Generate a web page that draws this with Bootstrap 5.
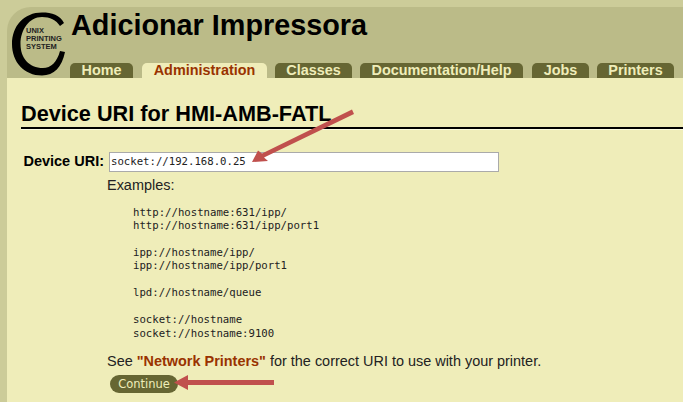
<!DOCTYPE html>
<html lang="en"><head><meta charset="utf-8"><title>Adicionar Impressora</title>
<link href="https://cdn.jsdelivr.net/npm/bootstrap@5.3.0/dist/css/bootstrap.min.css" rel="stylesheet">
<style>
html,body{height:100%;overflow:hidden}
body{background:#cccc99;font-family:"Liberation Sans",Arial,sans-serif;color:#111;position:relative}
.shell{padding:7px 0 0 7px;height:402px}
.head-band{background:#bbbb88;height:71px;border-top-left-radius:24px;position:relative}
.logo-c{position:absolute;left:4px;top:4px}
.logo-t{position:absolute;left:19px;top:20px;font-size:7.500px;line-height:8px;font-weight:700;color:#222}
.page-name{font-size:28.8px;font-weight:700;color:#000;margin:0;position:absolute;left:64px;top:2px;line-height:32px}
.tab-row{position:absolute;left:63px;bottom:0;display:flex}
.tab-item{background:#666633;color:#efedb9;font-size:14.4px;font-weight:700;height:15px;line-height:15px;border-radius:5px 5px 0 0;text-align:center;text-decoration:none;flex:none}
.tab-item.on{background:#efedb9;color:#993300}
.body-pane{background:#efedb9;height:324px;padding:22px 0 0 14px}
.sect-title{font-size:21.7px;font-weight:700;color:#000;margin:0;line-height:27px;border-bottom:2px solid #000;height:29px;box-shadow:0 1px 0 #fbfbe0}
.uri-row{margin-top:22px;display:flex;align-items:center}
.uri-lab{width:83px;text-align:right;font-size:14.500px;font-weight:700;color:#000;margin:0}
.uri-in{width:390px;height:20px;margin-left:5px;border:1px solid #aaa;background:#fff;font:10.67px/18px "DejaVu Sans Mono",monospace;color:#222;padding:0 1px;border-radius:0;outline:0}
.ex-block{margin-left:86px}
.ex-head{font-size:14.45px;line-height:16px;margin-top:4px;color:#222}
.ex-pre{font:10.67px/13.42px "DejaVu Sans Mono",monospace;margin:13px 0 0 26px;color:#222;overflow:visible}
.see-line{font-size:14.45px;line-height:16px;margin:13.500px 0 0;color:#222}
.see-line a{color:#993300;font-weight:700;text-decoration:none}
.go-btn{background:#666633;color:#efedb9;border:0;border-radius:10px;font-size:11.500px;height:18px;width:68px;padding:0;margin:6px 0 0 3px;line-height:18px;font-family:"DejaVu Sans",sans-serif}
.arrows{position:absolute;left:0;top:0;pointer-events:none}
</style></head><body>
<div class="shell">
  <div class="head-band">
    <svg class="logo-c" width="60" height="68" viewBox="11 11 60 68"><path d="M64 23C60 15 52 12.500 42 12.500 24 12.500 12 26 12 44S24 75.500 42 75.500C54 75.500 62 67 65 52L60 51C57 62 51 68 43 68 29 68 20.500 58 20.500 44S29 17 42 17C50 17 56 20 60 26z" fill="#000"/></svg>
    <div class="logo-t">UNIX<br>PRINTING<br>SYSTEM</div>
    <h1 class="page-name">Adicionar Impressora</h1>
    <nav class="tab-row">
      <a class="tab-item" href="#" style="width:63px;margin-right:9px">Home</a>
      <a class="tab-item on" href="#" style="width:125px;margin-right:8px">Administration</a>
      <a class="tab-item" href="#" style="width:77px;margin-right:8px">Classes</a>
      <a class="tab-item" href="#" style="width:163px;margin-right:9px">Documentation/Help</a>
      <a class="tab-item" href="#" style="width:57px;margin-right:8px">Jobs</a>
      <a class="tab-item" href="#" style="width:77px">Printers</a>
    </nav>
  </div>
  <div class="body-pane">
    <h2 class="sect-title">Device URI for HMI-AMB-FATL</h2>
    <div class="uri-row"><label class="uri-lab" for="u">Device URI:</label><input id="u" class="uri-in" value="socket://192.168.0.25"></div>
    <div class="ex-block">
      <div class="ex-head">Examples:</div>
<pre class="ex-pre">http://hostname:631/ipp/
http://hostname:631/ipp/port1

ipp://hostname/ipp/
ipp://hostname/ipp/port1

lpd://hostname/queue

socket://hostname
socket://hostname:9100</pre>
      <p class="see-line">See <a href="#">"Network Printers"</a> for the correct URI to use with your printer.</p>
      <button class="go-btn" type="button">Continue</button>
    </div>
  </div>
</div>
<svg class="arrows" width="683" height="402">
  <g fill="#c0504d" stroke="none">
    <path d="M352 109.500l2 4.500L264 157.500l4 3.500-16 1 6-11.500 4 3z"/>
    <path d="M274 380v5H188v5l-14-7.500 14-7.500v5z"/>
  </g>
</svg>
<script src="https://cdn.jsdelivr.net/npm/bootstrap@5.3.0/dist/js/bootstrap.bundle.min.js"></script>
</body></html>
